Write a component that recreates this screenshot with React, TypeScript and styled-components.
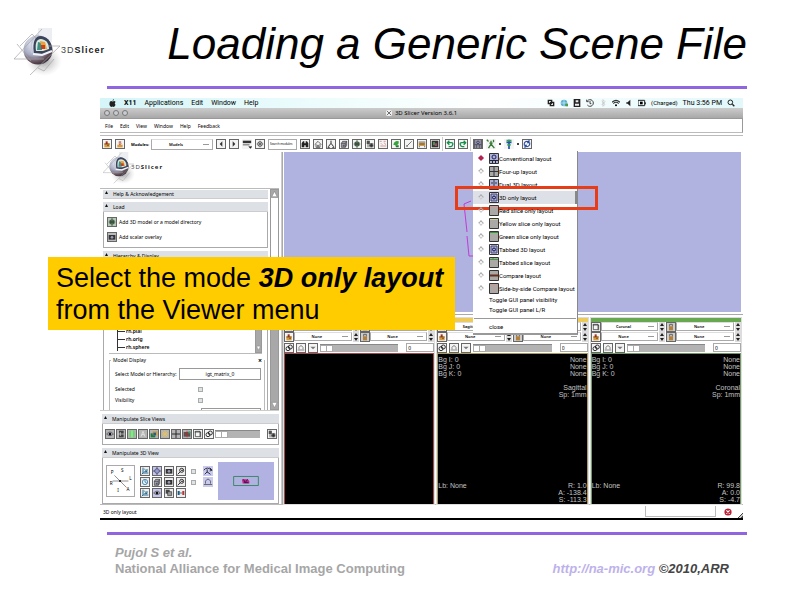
import React from "react";
import styled, { createGlobalStyle, css } from "styled-components";

const GlobalStyle = createGlobalStyle`
  * { box-sizing: border-box; }
  body { margin: 0; background: #fff; color: #000; font-family: "Liberation Sans", Arial, sans-serif; }
  button, input, select { font: inherit; color: inherit; margin: 0; padding: 0; border-radius: 0; }
  h1, h2, p { margin: 0; font-weight: 400; }
`;

/* ---------- slide ---------- */

const Slide = styled.main`
  min-height: 100vh;
  overflow: hidden;
`;
const Header = styled.header`
  display: flex;
  justify-content: space-between;
  height: 86px;
  padding: 0 53px 0 14px;
`;
const Brand = styled.div<{ $small?: boolean }>`
  display: flex;
  align-items: flex-start;
  color: #444;
  font-size: ${(p) => (p.$small ? 6 : 9)}px;
  line-height: ${(p) => (p.$small ? 8 : 12)}px;
  letter-spacing: 1px;
  ${(p) => (p.$small ? css`padding: 0 0 0 3px;` : css`padding-top: 28px;`)}
  svg { flex: none; width: ${(p) => (p.$small ? 32 : 48)}px; height: ${(p) => (p.$small ? 32 : 48)}px; }
  span { margin: ${(p) => (p.$small ? "11px 0 0 -4px" : "16px 0 0 -1px")}; }
  b { color: #222; }
`;
const Title = styled.h1`
  font-size: 44px;
  line-height: 50px;
  font-style: italic;
  padding-top: 19px;
  white-space: nowrap;
`;
const Rule = styled.hr`
  height: 3px;
  margin: 0 53px 0 107px;
  border: 0;
  background: #8f66e0;
`;
const Stage = styled.section`
  position: relative;
  margin: 9px 57px 12px 100px;
`;
const Footer = styled.footer`
  display: flex;
  justify-content: space-between;
  align-items: flex-end;
  padding: 10px 71px 0 115px;
  font-size: 13px;
  line-height: 16px;
  font-weight: 700;
  color: #a6a6a6;
`;
const Credit = styled.p`
  font-weight: 700;
  font-size: 13px;
`;
const Copyright = styled.p`
  font-weight: 700;
  font-style: italic;
  color: #444;
  a { color: #bdb2ea; text-decoration: none; }
`;
const Callout = styled.aside`
  position: absolute;
  z-index: 5;
  left: -52px;
  top: 159px;
  width: 407px;
  padding: 5px 8px 4px;
  background: #fc0;
  font-size: 27px;
  line-height: 32px;
  white-space: nowrap;
`;

/* ---------- desktop chrome ---------- */

const MacBar = styled.div`
  display: flex;
  align-items: center;
  justify-content: space-between;
  height: 10px;
  padding: 0 8px 0 9px;
  background: linear-gradient(90deg, #d5f5f8, #eefcfc 35%, #fff 60%, #e2f8fa);
  font: 7px/10px Roboto, sans-serif;
`;
const MacMenus = styled.nav`
  display: flex;
  align-items: center;
  gap: 8px;
  svg { width: 7px; height: 8px; }
`;
const MacStatus = styled.div`
  display: flex;
  align-items: center;
  gap: 5px;
  svg { width: 8px; height: 8px; }
  small { font-size: 6px; }
`;
const Plain = styled.button<{ $bold?: boolean }>`
  border: 0;
  background: none;
  line-height: inherit;
  font-weight: ${(p) => (p.$bold ? 700 : 400)};
`;
const TitleBar = styled.div`
  display: flex;
  align-items: center;
  height: 11px;
  padding: 0 4px;
  background: linear-gradient(#ccc, #a8a8a8);
  border-bottom: 1px solid #999;
  font: 6px/10px "Noto Sans", sans-serif;
`;
const Lights = styled.div`
  display: flex;
  gap: 3px;
  flex: 1;
`;
const Light = styled.i`
  width: 6px;
  height: 6px;
  border-radius: 50%;
  background: #c8ccd0;
  border: 1px solid #777;
`;
const WindowTitle = styled.h2`
  display: flex;
  align-items: center;
  gap: 3px;
  font-size: 6px;
  svg { width: 6px; height: 6px; background: #eee; }
`;
const Grow = styled.div`flex: 1;`;
const MenuRow = styled.nav`
  display: flex;
  align-items: center;
  gap: 7px;
  height: 14px;
  padding-left: 5px;
  border-right: 1px solid #999;
  border-bottom: 1px solid #bbb;
  font: 5px/8px "Noto Sans", sans-serif;
`;
const ToolRow = styled.div`
  display: flex;
  align-items: center;
  gap: 3px;
  height: 17px;
  margin-top: 2px;
  padding-left: 2px;
  border-top: 1px solid #bbb;
  font: 5px/7px "Noto Sans", sans-serif;
`;
const ToolLabel = styled.label`
  width: 20px;
  padding-left: 3px;
  font-size: 4px;
  font-weight: 700;
`;
const IconButton = styled.button<{ $tone?: string; $noBox?: boolean }>`
  flex: none;
  width: 10px;
  height: 10px;
  border: ${(p) => (p.$noBox ? "0" : "1px solid #666")};
  background: ${(p) => p.$tone ?? "#f4f4f4"};
  line-height: 0;
  svg { display: block; width: 100%; height: 100%; }
`;
const Divider = styled.i`
  width: 1px;
  height: 14px;
  margin: 0 -1px;
  background: #ccc;
`;
const Caret = styled.i`
  width: 2px;
  height: 2px;
  background: #444;
`;
const MiniSelect = styled.select<{ $w?: number }>`
  appearance: none;
  min-width: 0;
  width: ${(p) => (p.$w ? `${p.$w}px` : "100%")};
  height: ${(p) => (p.$w ? 11 : 9)}px;
  border: 1px solid #aaa;
  border-top-color: #ddd;
  background: linear-gradient(#999, #999) right 3px center / 6px 1px no-repeat #fff;
  font-size: 4px;
  font-weight: 600;
  line-height: 7px;
  text-align: center;
  text-align-last: center;
  padding-right: 12px;
`;
const MiniInput = styled.input<{ $search?: boolean }>`
  width: ${(p) => (p.$search ? 29 : 28)}px;
  height: ${(p) => (p.$search ? 11 : 9)}px;
  border: 1px solid #aaa;
  background: #fff;
  padding-left: 1px;
  font-size: ${(p) => (p.$search ? 3 : 5)}px;
`;

/* ---------- workspace ---------- */

const Workspace = styled.div`
  display: grid;
  grid-template-columns: 179px 5px minmax(0, 1fr);
  height: 352px;
`;
const Sash = styled.div`
  border-left: 1px solid #ccc;
  border-right: 1px solid #aaa;
  margin: 0 1px 0 2px;
`;
const LeftPane = styled.div`
  display: flex;
  flex-direction: column;
  min-height: 0;
  font: 5px/7px "Noto Sans", sans-serif;
`;
const ModuleArea = styled.div`
  display: flex;
  height: 223px;
  border-top: 1px solid #bbb;
  border-bottom: 1px solid #ccc;
`;
const ModuleList = styled.div`
  display: flex;
  flex-direction: column;
  gap: 3px;
  flex: 1;
  padding: 1px 2px 0 3px;
  overflow: hidden;
`;
const Scroll = styled.div<{ $thin?: boolean }>`
  display: flex;
  flex-direction: column;
  justify-content: space-between;
  width: ${(p) => (p.$thin ? 7 : 9)}px;
  background: #a8a8a8;
  border: 1px solid #999;
  svg { display: block; width: 100%; height: 8px; }
`;
const Thumb = styled.i`
  flex: 1;
  margin-bottom: 118px;
  background: #fff;
`;
const SectionHead = styled.h2`
  display: flex;
  align-items: center;
  gap: 5px;
  height: 10px;
  padding-left: 2px;
  background: #dde0e5;
  border-bottom: 1px solid #ccc;
  font-size: 5px;
  line-height: 8px;
  svg { width: 3px; height: 3px; margin-top: -3px; }
`;
const Body = styled.div`
  border: 1px solid #aaa;
  border-top: 0;
`;
const LoadBody = styled(Body)`
  display: flex;
  flex-direction: column;
  justify-content: space-evenly;
  height: 36px;
  padding-left: 3px;
`;
const LoadRow = styled.div`
  display: flex;
  align-items: center;
  gap: 2px;
`;
const TreeBox = styled.div`
  display: flex;
  justify-content: space-between;
  height: 93px;
  margin: 0 5px 3px 5px;
  border-bottom: 1px solid #bbb;
`;
const Tree = styled.ul`
  display: flex;
  flex-direction: column;
  justify-content: flex-end;
  margin: 0 0 2px 8px;
  padding: 0;
  list-style: none;
  font-weight: 600;
  line-height: 8px;
`;
const Leaf = styled.li`
  display: flex;
  align-items: center;
  gap: 1px;
  border-left: 1px solid #333;
  &::before { content: ""; width: 7px; height: 1px; background: #333; }
`;
const DisplayFrame = styled.fieldset`
  min-width: 0;
  margin: 0 2px 0 5px;
  padding: 0 3px 0 5px;
  height: 60px;
  border: 1px solid #bbb;
  legend { padding: 0 2px; margin-left: -4px; }
`;
const FrameTitle = styled.legend`
  display: flex;
  justify-content: space-between;
  width: 153px;
  &::after { content: "×"; font-weight: 700; font-size: 7px; }
`;
const Field = styled.label`
  display: flex;
  align-items: center;
  justify-content: space-between;
  height: 20px;
`;
const CheckField = styled.label`
  display: grid;
  grid-template-columns: 83px 1fr;
  align-items: center;
  height: 11px;
`;
const Check = styled.input`
  appearance: none;
  width: 5px;
  height: 5px;
  border: 1px solid #aaa;
  background: #dde4e6;
`;
const FrameButton = styled.button`
  width: 82px;
  height: 12px;
  border: 1px solid #999;
  background: #fff;
  line-height: 8px;
`;
const FrameEntry = styled.input`
  display: block;
  width: 60px;
  height: 10px;
  margin: 2px 0 0 auto;
  border: 1px solid #999;
`;
const Panel = styled.section`
  margin: 3px 0 0 2px;
`;
const SliceTools = styled(Body)`
  display: flex;
  align-items: center;
  gap: 1px;
  height: 21px;
  padding: 0 1px 0 2px;
`;
const Range = styled.input`
  appearance: none;
  flex: 1;
  min-width: 0;
  height: 8px;
  margin: 0 6px 0 0;
  background: #b3b3b3;
  border-top: 1px solid #888;
  &::-webkit-slider-thumb {
    appearance: none;
    width: 13px;
    height: 7px;
    border: 1px solid #aaa;
    background: linear-gradient(90deg, #fff 5px, #aaa 5px, #aaa 6px, #fff 6px);
  }
`;
const ViewTools = styled(Body)`
  display: flex;
  align-items: center;
  height: 46px;
  padding: 0 4px 0 3px;
  gap: 5px;
`;
const Rosette = styled.svg`
  flex: none;
  width: 29px;
  height: 32px;
  border: 1px solid #aaa;
`;
const ToolGrid = styled.div<{ $cols: number }>`
  display: grid;
  grid-template-columns: repeat(${(p) => p.$cols}, 10px);
  gap: 1px 2px;
  align-items: center;
  align-self: flex-start;
  margin-top: 8px;
`;
const Navigator = styled.svg`
  flex: 1;
  min-width: 0;
  height: 38px;
  background: #b1b2e2;
`;

/* ---------- viewers ---------- */

const Viewer = styled.div`
  display: flex;
  flex-direction: column;
  min-width: 0;
`;
const Scene = styled.div`
  flex: 1;
  background: #b0b2e0;
  margin: 0 2px 2px 0;
  svg { display: block; width: 12px; height: 60px; margin: 48px 0 0 178px; }
`;
const Slices = styled.div`
  display: grid;
  grid-template-columns: repeat(3, minmax(0, 1fr));
  gap: 3px;
  padding: 3px 2px 0 0;
  border-top: 1px solid #aaa;
`;
const Slice = styled.section<{ $color: string }>`
  border-top: 4px solid ${(p) => p.$color};
  outline: 1px solid #ddd;
  font: 5px/7px "Noto Sans", sans-serif;
`;
const SliceRow = styled.div`
  display: grid;
  grid-template-columns: 9px minmax(0, 1fr) 6px 9px minmax(0, 1fr) 6px;
  gap: 1px;
  height: 10px;
`;
const Spin = styled.svg`
  width: 6px;
  height: 10px;
  background: #ddd;
`;
const SliderRow = styled.div`
  display: flex;
  align-items: center;
  gap: 2px;
  height: 11px;
`;
const Image = styled.div<{ $edge: string }>`
  display: flex;
  flex-direction: column;
  justify-content: space-between;
  height: 151px;
  border: 1px solid ${(p) => p.$edge};
  border-bottom: 0;
  padding: 2px 0 1px;
  background: #000;
  color: #c4c4c4;
  font: 7px/7px "Liberation Sans", sans-serif;
`;
const Readout = styled.div`
  display: flex;
  justify-content: space-between;
  white-space: pre;
  p:last-child { text-align: right; }
`;
const StatusBar = styled.footer`
  display: flex;
  align-items: center;
  height: 16px;
  border-top: 1px solid #bbb;
  border-bottom: 2px solid #000;
  font: 5px/8px "Noto Sans", sans-serif;
  span { flex: 1; padding-left: 3px; }
  svg { width: 8px; height: 8px; }
`;
const Meter = styled.i`
  width: 71px;
  height: 11px;
  margin-right: 8px;
  border: 1px solid #bbb;
  border-top: 0;
`;
const Grip = styled.i`
  align-self: flex-end;
  width: 6px;
  height: 6px;
  margin-left: 5px;
  background: linear-gradient(135deg, #fff 50%, #444 50%, #444 62%, #ccc 62%, #ccc 75%, #444 75%);
`;

/* ---------- layout menu ---------- */

const ToolAnchor = styled.div`
  position: relative;
`;
const LayoutMenu = styled.div`
  position: absolute;
  z-index: 6;
  left: 0;
  top: 12px;
  width: 105px;
  padding: 1px 0;
  background: #fff;
  border-right: 1px solid #888;
  border-bottom: 2px solid #999;
  font: 6px/9px Roboto, sans-serif;
  white-space: nowrap;
  hr { height: 1px; border: 0; margin: 3px 1px; background: #999; }
`;
const LayoutItem = styled.label<{ $active?: boolean }>`
  position: relative;
  display: flex;
  align-items: center;
  height: 13px;
  padding-left: 6px;
  background: ${(p) => (p.$active ? "#dde0e6" : "transparent")};
  border-right: ${(p) => (p.$active ? "2px solid #888" : "0")};
  svg { width: 10px; height: 11px; margin-left: 6px; }
`;
const Diamond = styled.input`
  appearance: none;
  width: 4px;
  height: 4px;
  border: 1px solid #aaa;
  border-right-color: #ccc;
  border-bottom-color: #ccc;
  transform: rotate(45deg);
  &:checked { background: #b22250; border-color: #b22250; }
`;
const MenuCommand = styled.button`
  display: block;
  width: 100%;
  height: 10px;
  padding-left: 16px;
  border: 0;
  background: none;
  text-align: left;
  line-height: 9px;
`;
const Highlight = styled.span`
  position: absolute;
  left: -18px;
  right: -23px;
  top: -5px;
  height: 24px;
  border: 3px solid #e63c18;
`;

/* ---------- drawings ---------- */

const Sphere = () => (
  <svg viewBox="0 0 48 48" aria-hidden="true">
    <defs>
      <radialGradient id="ball" cx=".35" cy=".3" r=".75">
        <stop offset="0" stopColor="#eef0f8" />
        <stop offset=".5" stopColor="#a9adc4" />
        <stop offset=".85" stopColor="#5c4750" />
        <stop offset="1" stopColor="#33303c" />
      </radialGradient>
      <radialGradient id="shade">
        <stop offset="0" stopColor="#777" stopOpacity=".7" />
        <stop offset="1" stopColor="#bbb" stopOpacity="0" />
      </radialGradient>
    </defs>
    <ellipse cx="30" cy="33" rx="18" ry="15" fill="url(#shade)" />
    <path d="M24 0h14v14H24z" fill="#eceef2" />
    <circle cx="24" cy="22" r="14.5" fill="url(#ball)" />
    <path d="M20 25C18 14 21 8 27 8c8 1 11 8 11 15l-9 3z" fill="#39435a" />
    <path d="M22 23c-1-7 0-12 5-12 6 1 8 5 8 10l-6 2z" fill="#dbe8e0" />
    <path d="M23 22l1-8 4 1v7z" fill="#3c9186" />
    <path d="M26 13l5 1 2 7h-5z" fill="#e9a23c" />
    <path d="M27 17h4v4h-4z" fill="#c8401f" />
    <path d="M19 26l9 1 10-4" stroke="#f1f1f8" strokeWidth="2.2" fill="none" />
    <path d="M18 25C16 15 19 8 25 7" stroke="#c4c9d8" strokeWidth="1.6" fill="none" />
    <path d="M0 31L28 1M3 16l14 17M0 31h30M16 47L46 18M46 18H34M24 40l6 3 10-12M6 18L18 6l4 4" stroke="#a3a3a3" strokeWidth=".7" fill="none" />
  </svg>
);

const glyphs: Record<string, React.ReactNode> = {
  load: <><path d="M2 5h8v6H2z" fill="#d79a3c" /><path d="M4 2h3v4H4z" fill="#a83020" /><path d="M2 6h8M6 8h3" stroke="#5c3510" /></>,
  save: <><path d="M2 7h8v4H2z" fill="#d79a3c" /><path d="M4 3h4M6 2v5M4 5l2 2 2-2" stroke="#a83020" fill="none" /></>,
  prev: <path d="M8 2v8L4 6z" fill="#333" />,
  next: <path d="M4 2v8l4-4z" fill="#333" />,
  list: <><path d="M1 2h10v3H1z" fill="#333" /><path d="M1 7h8M8 9l2 2 2-2" stroke="#444" /></>,
  gear: <><circle cx="6" cy="6" r="3.5" fill="none" stroke="#333" /><path d="M6 1v10M1 6h10M3 3l6 6M9 3L3 9" stroke="#555" /></>,
  find: <path d="M1 5l2-3h2v3h2V2h2l2 3v6H7V8H5v3H1z" fill="#222" />,
  home: <path d="M1 7l5-5 5 5M3 6v5h6V6M5 11V8h2v3" stroke="#333" fill="none" />,
  tree: <path d="M6 1v4L2 10M6 5l4 5M1 11h3M8 11h3" stroke="#222" fill="none" strokeWidth="1.4" />,
  cube: <><path d="M2 5h6v6H2zM2 5l2-3h6v6l-2 3M8 5l2-3" stroke="#333" fill="#aab" /><path d="M4 7h3v3H4z" fill="#556" /></>,
  globe: <><circle cx="6" cy="6" r="4" fill="#6a8a4d" /><path d="M6 0v12M1 6h10M3 3q3 3 0 6M9 3q-3 3 0 6" stroke="#234" fill="none" /></>,
  grid: <><path d="M1 1h5v5H1zM5 5h6v6H5z" fill="#666" /><path d="M3 1v10M8 5v6M5 8h6" stroke="#222" /></>,
  pink: <path d="M1 2h3M7 2h3M3 5l2 2M8 4l2 3M2 9h9" stroke="#c8686c" />,
  leaf: <><path d="M2 7q2-7 8-5 1 6-5 6z" fill="#35a43c" /><path d="M5 8h5v3H6z" fill="#1c7530" /></>,
  line: <path d="M2 10l8-8M2 8l2 2" stroke="#333" />,
  ruler: <><path d="M1 4h10v5H1z" fill="#cf9c48" /><path d="M1 3h10M2 6h8M2 9v2M10 9v2" stroke="#333" /></>,
  color: <><path d="M1 1h10v10H1z" fill="#333" /><path d="M3 3h3v5H3z" fill="#4a8d50" /><path d="M6 5h3v4H6z" fill="#a9475c" /></>,
  undo: <path d="M2 4h6q3 0 2 3t-3 3H4M5 1L2 4l3 3" stroke="#13914a" fill="none" strokeWidth="2" />,
  redo: <path d="M10 4H4q-3 0-2 3t3 3h3M7 1l3 3-3 3" stroke="#13914a" fill="none" strokeWidth="2" />,
  layout: <><path d="M0 0h12v12H0z" fill="#99a" /><path d="M1 7h10M4 7v5M8 7v5M1 0v12M11 0v12" stroke="#334" /><circle cx="6" cy="3.5" r="2" fill="none" stroke="#225" /></>,
  person: <><path d="M1 1l2 2M9 1v3M6 2v4L3 11M6 6l4 5M4 5h4" stroke="#367a36" fill="none" strokeWidth="1.6" /></>,
  pin: <><path d="M6 1v11M3 4h6" stroke="#1e51a5" strokeWidth="2" /><path d="M3 2h6M4 7h4" stroke="#37a05a" strokeWidth="2" /></>,
  spin: <path d="M2 8q-1-5 4-6l3 1M10 4q1 5-4 6L3 9M9 0v4H6M3 12V8h3" stroke="#274a9c" fill="none" strokeWidth="1.6" />,
  turn: <path d="M1 5q4-5 9 0M2 10l3-3 4 3M8 2l3 3-3 1M5 4v4" stroke="#334" fill="none" strokeWidth="1.2" />,
  eye: <><path d="M1 6q5-6 10 0-5 5-10 0" fill="#bbc" stroke="#444" /><circle cx="6" cy="6" r="2" fill="#111" /></>,
  film: <><path d="M3 1h7v10H3z" fill="#444" /><path d="M1 6h10M5 3v6" stroke="#ddd" /></>,
  green: <><path d="M2 1h8v10H2z" fill="#6fd36f" /><path d="M6 1v10" stroke="#cfc" /></>,
  letter: <path d="M3 10l3-8 3 8M4 7h4" stroke="#eee" fill="none" />,
  stack: <><path d="M1 5h7v6H1z" fill="#197a42" /><path d="M4 2h7v6H4z" fill="#d09a35" /><path d="M5 4h4v4H5z" fill="#1f5ba3" /></>,
  star: <path d="M6 1v10M1 6h10M2 2l8 8M10 2l-8 8" stroke="#e8c35a" strokeWidth="1.4" />,
  cross: <path d="M6 0v12M0 6h12" stroke="#222" strokeWidth="1.4" fill="none" />,
  mix: <><path d="M1 3h10v7H1z" fill="#555" /><path d="M6 1v10M2 6h8" stroke="#c22" /><path d="M8 2h3v3H8z" fill="#2a7" /></>,
  link: <><circle cx="4.5" cy="7" r="3" fill="none" stroke="#222" strokeWidth="1.4" /><circle cx="8" cy="4.5" r="3" fill="none" stroke="#222" strokeWidth="1.4" /></>,
  dome: <path d="M3 8V5q3-5 6 0v3M1 9h10" stroke="#555" fill="none" />,
  down: <path d="M2 4h8L6 8z" fill="#777" />,
  axes: <path d="M3 1v8h8M3 9l-2 2M5 3l4 4M9 3v4H5" stroke="#16618d" fill="none" strokeWidth="1.4" />,
  target: <><circle cx="6" cy="6" r="3.5" fill="#99c" stroke="#446" /><path d="M6 0v3M6 9v3M0 6h3M9 6h3" stroke="#224" /></>,
  camera: <><path d="M1 3h10v7H1z" fill="#333" /><circle cx="6" cy="6.5" r="2" fill="#99b" /></>,
  zoom: <><circle cx="7" cy="5" r="3" fill="none" stroke="#222" strokeWidth="1.4" /><path d="M5 7l-4 4M6 5h3" stroke="#222" strokeWidth="1.4" /></>,
  clock: <><circle cx="6" cy="6" r="4" fill="#def" stroke="#16618d" /><path d="M6 3v3l3 2" stroke="#16618d" fill="none" /></>,
  layers: <><path d="M1 1h6v6H1z" fill="#444" /><path d="M4 4h6v6H4z" fill="#999" stroke="#333" /></>,
  redblue: <><path d="M1 3h3v6H1z" fill="#16618d" /><path d="M8 3h3v6H8z" fill="#b33" /><path d="M4 6h4" stroke="#333" /></>,
  box: <path d="M2 2h7v8H2zM1 3h9v8" stroke="#222" fill="none" />,
  lock: <><path d="M3 5h6v6H3z" fill="#b5803a" /><path d="M4 5V2h4v3" stroke="#333" fill="none" /></>,
};

const Glyph = ({ name }: { name: string }) => <svg viewBox="0 0 12 12">{glyphs[name]}</svg>;
const Tool = ({ name, tone, noBox }: { name: string; tone?: string; noBox?: boolean }) => (
  <IconButton type="button" aria-label={name} $tone={tone} $noBox={noBox}><Glyph name={name} /></IconButton>
);

const Up = () => <svg viewBox="0 0 8 8"><path d="M0 8h8L4 0z" fill="#111" /></svg>;
const ScrollArrow = ({ down }: { down?: boolean }) => (
  <svg viewBox="0 0 8 8"><path d={down ? "M1 1h6L4 7z" : "M1 7h6L4 1z"} fill="#fff" stroke="#777" strokeWidth=".5" /></svg>
);

const LayoutIcon = ({ kind }: { kind: string }) => (
  <svg viewBox="0 0 10 11" aria-hidden="true">
    <path d="M.5.5h9v10h-9z" fill={kind === "3d" ? "#dfe2ff" : kind === "conv" || kind === "dual" ? "#aeb2d8" : "#aaa9a5"} stroke="#333" />
    {kind === "3d" && <><path d="M2 2h6v7H2z" fill="#a9adda" stroke="#446" /><circle cx="5" cy="5.5" r="1.5" fill="none" stroke="#114" /></>}
    {kind === "conv" && <><path d="M1 7.5h8M3.5 8v2M6.5 8v2" stroke="#223" /><circle cx="5" cy="4" r="2" fill="none" stroke="#225" /></>}
    {kind === "four" && <path d="M1 5.5h8M5 1v9" stroke="#334" />}
    {kind === "dual" && <path d="M5 1v6M1 7.5h8M3 3v2M7 3v2M3.5 8v2M6.5 8v2" stroke="#334" />}
    {kind === "red" && <path d="M1 1.5h8" stroke="#d99" />}
    {kind === "yellow" && <path d="M1 1.5h8" stroke="#cc9" />}
    {kind === "green" && <path d="M1 1.5h8" stroke="#393" />}
    {kind === "tab" && <path d="M1 2.5h8M4 1v2" stroke="#494" />}
    {kind === "compare" && <path d="M1 5.5h8" stroke="#642f20" strokeWidth="2" />}
    {kind === "side" && <path d="M1 2.5h8M5 2v8" stroke="#c99" />}
  </svg>
);

const layouts: [string, string][] = [
  ["Conventional layout", "conv"],
  ["Four-up layout", "four"],
  ["Dual 3D layout", "dual"],
  ["3D only layout", "3d"],
  ["Red slice only layout", "red"],
  ["Yellow slice only layout", "yellow"],
  ["Green slice only layout", "green"],
  ["Tabbed 3D layout", "3d"],
  ["Tabbed slice layout", "tab"],
  ["Compare layout", "compare"],
  ["Side-by-side Compare layout", "side"],
];

const slices = [
  { name: "Red", color: "#c8403a", edge: "#a34a4a", label: "", left: "", foot: "", coords: "", first: "Axial" },
  { name: "Yellow", color: "#eccb5c", edge: "#a89a60", label: "Sagittal", left: "Bg I: 0\nBg J: 0\nBg K: 0", foot: "Lb: None", coords: "R: 1.0\nA: -138.4\nS: -113.3", first: "Sagittal" },
  { name: "Green", color: "#68a850", edge: "#6f9a68", label: "Coronal", left: "Bg I: 0\nBg J: 0\nBg K: 0", foot: "Lb: None", coords: "R: 99.8\nA: 0.0\nS: -4.7", first: "Coronal" },
];

const SpinArrows = () => <Spin viewBox="0 0 6 10"><path d="M1 4h4L3 1zM1 6h4L3 9z" fill="#222" /></Spin>;

const Choice = ({ label, value }: { label: string; value: string }) => (
  <MiniSelect aria-label={label} defaultValue={value}><option>{value}</option></MiniSelect>
);

export default function App() {
  return (
    <Slide>
      <GlobalStyle />
      <Header>
        <Brand><Sphere /><span>3D<b>Slicer</b></span></Brand>
        <Title>Loading a Generic Scene File</Title>
      </Header>
      <Rule />
      <Stage>
        <MacBar>
          <MacMenus>
            <svg viewBox="0 0 14 16"><path d="M10 0q0 3-3 4 0-3 3-4M4 4q2 0 3 1 2-1 4-1 2 1 2 2-3 2 0 6-2 4-4 4l-2-1-2 1Q0 14 1 8q0-3 3-4" fill="#222" /></svg>
            <Plain $bold>X11</Plain><Plain>Applications</Plain><Plain>Edit</Plain><Plain>Window</Plain><Plain>Help</Plain>
          </MacMenus>
          <MacStatus>
            <svg viewBox="0 0 12 12"><path d="M2 2h5v5H2zM5 5h5v5H5z" fill="none" stroke="#222" strokeWidth="2" /></svg>
            <svg viewBox="0 0 12 12"><circle cx="6" cy="6" r="5" fill="#5aaed0" /><path d="M1 6h10M6 1v10" stroke="#d5f2ff" /><path d="M8 7h4v4H8z" fill="#4a9b45" /></svg>
            <svg viewBox="0 0 12 12"><path d="M1 0h10v12H1z" fill="#222" /><path d="M4 2h4v3H4zM3 7h6v3H3z" fill="#eee" /></svg>
            <svg viewBox="0 0 12 12"><path d="M2 3a5 5 0 1 1 0 6M1 1v3h3M6 3v4h2" fill="none" stroke="#333" strokeWidth="1.4" /></svg>
            <svg viewBox="0 0 12 12"><path d="M4 3l5 5-3 3V1l3 3-5 5" fill="none" stroke="#bbb" /></svg>
            <svg viewBox="0 0 12 12"><path d="M0 5q6-6 12 0M2 7q4-4 8 0" fill="none" stroke="#333" strokeWidth="1.6" /><circle cx="6" cy="9.5" r="1.5" /></svg>
            <svg viewBox="0 0 12 12"><path d="M2 5h2l4-4v10L4 7H2z" fill="#222" /></svg>
            <svg viewBox="0 0 12 12"><path d="M0 2h10v8H0zM11 5v3" fill="none" stroke="#222" strokeWidth="1.5" /><path d="M3 4h4v4H3z" /></svg>
            <small>(Charged)</small><span>Thu 3:56 PM</span>
            <svg viewBox="0 0 12 12"><circle cx="5" cy="5" r="3.5" fill="none" stroke="#222" strokeWidth="1.5" /><path d="M8 8l3 3" stroke="#222" strokeWidth="2" /></svg>
          </MacStatus>
        </MacBar>
        <TitleBar>
          <Lights><Light /><Light /><Light /></Lights>
          <WindowTitle><svg viewBox="0 0 8 8"><path d="M1 1l6 6M7 1L1 7" stroke="#444" /></svg>3D Slicer Version 3.6.1</WindowTitle>
          <Grow />
        </TitleBar>
        <MenuRow>
          {["File", "Edit", "View", "Window", "Help", "Feedback"].map((m) => <Plain key={m}>{m}</Plain>)}
        </MenuRow>
        <ToolRow>
          <Tool name="load" /><Tool name="save" />
          <ToolLabel htmlFor="module">Modules:</ToolLabel>
          <MiniSelect id="module" $w={62} defaultValue="Models"><option>Models</option></MiniSelect>
          {["prev", "next"].map((n) => <Tool key={n} name={n} />)}
          <Tool name="list" noBox /><Tool name="gear" />
          <MiniInput aria-label="Search modules" $search defaultValue="Search modules" />
          {["find", "home", "tree", "cube", "globe", "grid", "pink", "leaf", "line", "ruler", "color"].map((n) => <Tool key={n} name={n} />)}
          <Divider />
          <Tool name="undo" /><Tool name="redo" />
          <Divider />
          <ToolAnchor>
            <Tool name="layout" />
            <LayoutMenu>
              {layouts.map(([text, kind], i) => (
                <LayoutItem key={text} $active={i === 3}>
                  <Diamond type="radio" name="layout" defaultChecked={i === 0} />
                  <LayoutIcon kind={kind} />{text}
                  {i === 3 && <Highlight />}
                </LayoutItem>
              ))}
              <MenuCommand>Toggle GUI panel visibility</MenuCommand>
              <MenuCommand>Toggle GUI panel L/R</MenuCommand>
              <hr />
              <MenuCommand>close</MenuCommand>
            </LayoutMenu>
          </ToolAnchor>
          <Tool name="person" noBox /><Caret />
          <Tool name="pin" noBox /><Caret />
          <Tool name="spin" />
        </ToolRow>

        <Workspace>
          <LeftPane>
            <Grow><Brand $small><Sphere /><span>3D<b>Slicer</b></span></Brand></Grow>
            <ModuleArea>
              <ModuleList>
                <SectionHead><Up />Help &amp; Acknowledgement</SectionHead>
                <div>
                  <SectionHead><Up />Load</SectionHead>
                  <LoadBody>
                    <LoadRow><Tool name="globe" tone="#b8c8b8" />Add 3D model or a model directory</LoadRow>
                    <LoadRow><Tool name="camera" tone="#bbb" />Add scalar overlay</LoadRow>
                  </LoadBody>
                </div>
                <div>
                  <SectionHead><Up />Hierarchy &amp; Display</SectionHead>
                  <Body>
                    <TreeBox>
                      <Tree><Leaf>rh.pial</Leaf><Leaf>rh.orig</Leaf><Leaf>rh.sphere</Leaf></Tree>
                      <Scroll $thin><i /><ScrollArrow down /></Scroll>
                    </TreeBox>
                    <DisplayFrame>
                      <FrameTitle>Model Display</FrameTitle>
                      <Field>Select Model or Hierarchy:<FrameButton>igt_matrix_0</FrameButton></Field>
                      <CheckField>Selected<Check type="checkbox" /></CheckField>
                      <CheckField>Visibility<Check type="checkbox" /></CheckField>
                      <FrameEntry aria-label="Opacity" />
                    </DisplayFrame>
                  </Body>
                </div>
              </ModuleList>
              <Scroll><ScrollArrow /><Thumb /><ScrollArrow down /></Scroll>
            </ModuleArea>
            <Panel>
              <SectionHead><Up />Manipulate Slice Views</SectionHead>
              <SliceTools>
                {["eye", "film", "green", "letter", "stack", "star", "cross", "mix"].map((n) => <Tool key={n} name={n} tone="#b4b4b4" />)}
                <Tool name="box" /><Tool name="link" />
                <Range type="range" aria-label="Opacity" defaultValue={0} />
                <Tool name="grid" />
              </SliceTools>
            </Panel>
            <Panel>
              <SectionHead><Up />Manipulate 3D View</SectionHead>
              <ViewTools>
                <Rosette viewBox="0 0 29 32" role="img" aria-label="View axes">
                  <path d="M6 16h17M8 10l13 13" stroke="#555" strokeWidth=".7" /><circle cx="14" cy="16" r="1" />
                  <g fontSize="5"><text x="4" y="9">P</text><text x="15" y="6">S</text><text x="24" y="15">L</text><text x="3" y="20">R</text><text x="11" y="28">I</text><text x="21" y="27">A</text></g>
                </Rosette>
                <ToolGrid $cols={4}>
                  {["axes", "target", "camera", "zoom", "clock", "cube", "camera", "zoom", "axes", "eye", "layers", "redblue"].map((n, i) => (
                    <Tool key={i} name={n} tone={n === "target" || n === "eye" ? "#c5c6ee" : "#eee"} />
                  ))}
                </ToolGrid>
                <ToolGrid $cols={2}>
                  <Check type="checkbox" aria-label="Spin" /><Tool name="turn" tone="#c9caee" noBox />
                  <Check type="checkbox" aria-label="Rock" /><Tool name="dome" tone="#c9caee" noBox />
                </ToolGrid>
                <Navigator viewBox="0 0 68 38" role="img" aria-label="Navigation view">
                  <path d="M19 13.5h30v11H19z" fill="none" stroke="#248052" />
                  <path d="M29 17h7l2 2v3h-8z" fill="#c0268d" /><path d="M31 17l2 4 3-4M32 21h5" stroke="#301040" fill="none" />
                </Navigator>
              </ViewTools>
            </Panel>
          </LeftPane>
          <Sash />
          <Viewer>
            <Scene>
              <svg viewBox="0 0 12 60"><path d="M2 4l7-3M2 4l3 28M5 36l2 20h4" stroke="#c23bd6" fill="none" /></svg>
            </Scene>
            <Slices>
              {slices.map((s) => (
                <Slice key={s.name} $color={s.color}>
                  <SliceRow>
                    <Tool name="box" /><Choice label={`${s.name} slice orientation`} value={s.first} /><SpinArrows />
                    <Tool name="lock" tone="#ccc" /><Choice label={`${s.name} foreground`} value="None" /><SpinArrows />
                  </SliceRow>
                  <SliceRow>
                    <Tool name="load" /><Choice label={`${s.name} label map`} value="None" /><SpinArrows />
                    <Tool name="lock" tone="#ccc" /><Choice label={`${s.name} background`} value="None" /><SpinArrows />
                  </SliceRow>
                  <SliderRow>
                    <Tool name="link" /><Tool name="dome" /><Tool name="down" />
                    <Range type="range" aria-label={`${s.name} offset`} defaultValue={0} />
                    <MiniInput aria-label={`${s.name} offset value`} defaultValue="0" />
                  </SliderRow>
                  <Image $edge={s.edge}>
                    {s.label && <>
                      <Readout><p>{s.left}</p><p>{`None\nNone\nNone\n\n${s.label}\nSp: 1mm`}</p></Readout>
                      <Readout><p>{s.foot}</p><p>{s.coords}</p></Readout>
                    </>}
                  </Image>
                </Slice>
              ))}
            </Slices>
          </Viewer>
        </Workspace>
        <StatusBar>
          <span>3D only layout</span><Meter />
          <svg viewBox="0 0 10 10"><circle cx="5" cy="5" r="4.5" fill="#bc2034" /><path d="M3 3l4 4M7 3L3 7" stroke="#fff" strokeWidth="1.4" /></svg>
          <Grip />
        </StatusBar>
        <Callout>Select the mode <b><i>3D only layout</i></b><br />from the Viewer menu</Callout>
      </Stage>
      <Rule />
      <Footer>
        <div><Credit as="em">Pujol S et al.</Credit><Credit>National Alliance for Medical Image Computing</Credit></div>
        <Copyright><a href="http://na-mic.org">http://na-mic.org</a> ©2010,ARR</Copyright>
      </Footer>
    </Slide>
  );
}
